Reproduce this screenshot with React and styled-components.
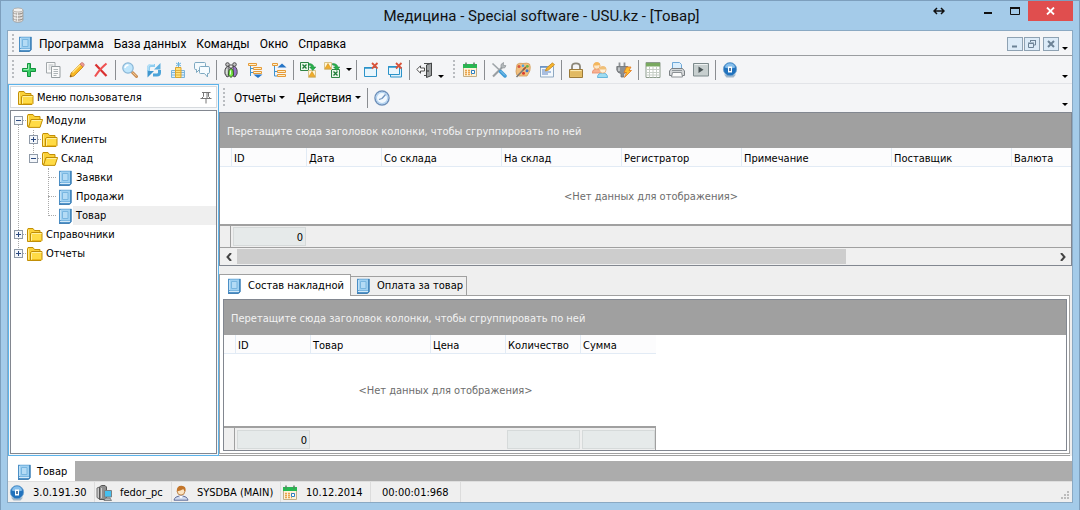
import React from "react";
import styled, { createGlobalStyle, css } from "styled-components";

const gridFont = '"DejaVu Sans Condensed", "Noto Sans", sans-serif';
const menuFont = 'Roboto, "Noto Sans", sans-serif';

const GlobalStyle = createGlobalStyle`
  *, *::before, *::after { box-sizing: border-box; }
  body { margin: 0; background: #a4cbe9; color: #000; font: 11px/14px ${gridFont}; }
  button { margin: 0; padding: 0; border: 0; background: none; color: inherit; font: inherit; }
  ul { list-style: none; margin: 0; padding: 0; }
  svg { display: block; flex: none; }
`;

/* ---------- icons ---------- */

const Svg = ({ w = 16, h = 16, box, children }) => (
  <svg width={w} height={h} viewBox={box || `0 0 ${w} ${h}`} fill="none" aria-hidden="true">
    {children}
  </svg>
);

const DatabaseIcon = () => (
  <Svg>
    <path d="M3 3v10c0 1.300 2.200 2.300 5 2.300s5-1 5-2.300V3" fill="#dedbd8" stroke="#9b958f" strokeWidth=".7" />
    <path d="M3 5.500c1 2 9 2 10 0M3 8.500c1 2 9 2 10 0M3 11.500c1 2 9 2 10 0" stroke="#8d8781" />
    <path d="M5 4v10M7.500 4.500v10" stroke="#fff" strokeOpacity=".7" />
    <ellipse cx="8" cy="3" rx="5" ry="2" fill="#f3f1ef" stroke="#a39d97" strokeWidth=".7" />
  </Svg>
);
const BookIcon = () => (
  <Svg>
    <path d="M2 .8h12.500v13l-1.500 1.700H2z" fill="#5d9fd3" />
    <path d="M2 1h2v14H2z" fill="#4b8fc6" />
    <path d="M3.500 1.500h9.500v11H3.500z" fill="#9fd0f1" />
    <path d="M5.500 3.500h5.500v7H5.500z" fill="#b4dbf5" stroke="#79b6e0" />
    <path d="M3 13.500h10" stroke="#d3e9f8" />
    <path d="M3.500 2v10" stroke="#bfe0f6" />
    <path d="M14 1v12.500L12.500 15.300H2" stroke="#2d70a9" />
  </Svg>
);
const FolderIcon = () => (
  <Svg>
    <path d="M.5 2.500 1 1.500h5l1.500 2h5.500v2.500l-9 8.500H.5z" fill="#fbd137" stroke="#c28f07" />
    <path d="M1.500 3v10.500" stroke="#ffeb8c" />
    <path d="M3.500 6.500 4.500 5.500H15v8l-1 1H3.500z" fill="#ffdb45" stroke="#c08e08" />
    <path d="M4.500 7.500v6M5 6.500h9.500" stroke="#fff0a0" />
    <path d="M5 13.500h9" stroke="#eebb1c" />
  </Svg>
);
const FolderOpenIcon = () => (
  <Svg>
    <path d="M.5 2.500 1 1.500h5l1.500 2h5.500v10H.5z" fill="#fbd137" stroke="#c28f07" />
    <path d="M1.500 3v9" stroke="#ffeb8c" />
    <path d="M4 6.500h11.600L13 14.400H1.500z" fill="#ffdb45" stroke="#c08e08" />
    <path d="M4.800 7.500h9.700" stroke="#fff0a0" />
  </Svg>
);
const PlusIcon = () => (
  <Svg>
    <path d="M6.500 1.500h3v5h5v3h-5v5h-3v-5h-5v-3h5z" fill="#3ccc68" stroke="#12943d" />
    <path d="M7.500 2.500v5h-5" stroke="#97edb0" />
  </Svg>
);
const CopyIcon = () => (
  <Svg>
    <path d="M1.500.500h8.500v10.500H1.500z" fill="#fafafa" stroke="#a2a8ab" />
    <path d="M3.500 3h5M3.500 5h2M3.500 7h2" stroke="#b6bcbf" />
    <path d="M6.500 4.500h8.500v11H6.500z" fill="#fafafa" stroke="#969da0" />
    <path d="M8.500 7.500h4.500M8.500 9.500h4.500M8.500 11.500h4.500M8.500 13.500h3" stroke="#adb4b7" />
  </Svg>
);
const PencilIcon = () => (
  <Svg>
    <path d="m1 15 1.200-4L11 2l3 3-9 9z" fill="#f8b824" stroke="#c47f10" strokeWidth=".8" />
    <path d="m3.500 10.500 8-8" stroke="#ffe58c" strokeWidth="1.500" />
    <path d="m11 2 1.300-1.200q1-.6 2.200.5t.5 2.300L14 5z" fill="#ee9a92" stroke="#bb6961" strokeWidth=".6" />
    <path d="m1 15 .6-2.200L3 14.300z" fill="#6d4a22" />
  </Svg>
);
const CrossIcon = () => (
  <Svg>
    <path d="M2.500 2.500 13.500 14" stroke="#d93030" strokeWidth="2.200" />
    <path d="M13.500 1.500Q7 6.500 2 14.500" stroke="#ef5252" strokeWidth="2" />
  </Svg>
);
const SearchIcon = () => (
  <Svg>
    <path d="m10.500 10.500 4 4" stroke="#c98b50" strokeWidth="3" strokeLinecap="round" />
    <path d="m10.500 10.500 4 3.700" stroke="#f7cf9c" />
    <circle cx="6" cy="6" r="5.200" fill="#bfe6fc" stroke="#8ab6d6" strokeWidth="1.200" />
    <path d="M3 6q.3-2.700 3.500-3" stroke="#fff" strokeWidth="1.500" />
  </Svg>
);
const RefreshIcon = () => (
  <Svg>
    <path d="M2.500 9V6Q2.500 3.500 5 3.500h4" stroke="#8fcdf0" strokeWidth="3" />
    <path d="M8 7.500h6.500V1z" fill="#5fb0e0" />
    <path d="M13.500 8v2.500q0 2.500-2.500 2.500H7" stroke="#4da4d9" strokeWidth="3" />
    <path d="M8 9H1.500v6.500z" fill="#3f97cf" />
    <path d="M2 8V5Q2.500 2.500 5 2.500h3" stroke="#c8e9fa" />
  </Svg>
);
const InsertIcon = () => (
  <Svg>
    <path d="M8.500 0v5M6 1l5 3M11 1 6 4" stroke="#6ab3de" />
    <path d="M1.500 8.500h4v7h-4zM10.500 8.500h4v7h-4z" fill="#dceefa" stroke="#79b4dc" />
    <path d="M1.500 10.500h4M1.500 13h4M10.500 10.500h4M10.500 13h4" stroke="#79b4dc" />
    <path d="M5.500 5.500h5.500v10H5.500z" fill="#ffe27a" stroke="#dba42f" />
    <path d="M5.500 8.500H11M5.500 10.500H11M5.500 13H11" stroke="#e0ad3a" />
  </Svg>
);
const ChatIcon = () => (
  <Svg>
    <path d="M2 .5h8.500q1 0 1 1v5q0 1-1 1H5.500l-3 3V7.500H2q-1.500 0-1.500-1v-5q0-1 1.500-1z" fill="#f4fafd" stroke="#7ea9c1" />
    <path d="M6.500 4.500h7.500q1.500 0 1.500 1v5q0 1-1.500 1h-.5v3.500l-3-3.500H6.500q-1 0-1-1v-5q0-1 1-1z" fill="#f7fcff" stroke="#7ea9c1" />
  </Svg>
);
const PeopleIcon = () => (
  <Svg>
    <path d="M5 4Q1 6 2 12l2 3 2-1V5z" fill="#b4b4b8" stroke="#4c4c4e" />
    <path d="M11 4q4 2 3 8l-2 3-2-1V5z" fill="#9673c6" stroke="#4c4c4e" />
    <path d="M8 6q3 2 2.500 7L8 15.500 5.500 13Q5 8 8 6z" fill="#76e944" stroke="#33502a" />
    <circle cx="4.500" cy="2.500" r="1.800" fill="#c4c4c4" stroke="#4c4c4e" />
    <circle cx="11.500" cy="2.500" r="1.800" fill="#c4c4c4" stroke="#4c4c4e" />
    <circle cx="8" cy="4.500" r="1.700" fill="#eee" stroke="#555" />
    <path d="M3.800 7v5M7.500 8.500v4" stroke="#eaf5e6" />
  </Svg>
);
const TreeIcon = ({ up }) => (
  <Svg>
    {up ? (
      <>
        <path d="M3.500 4v10H6M3.500 9.500H6" stroke="#3f93d0" />
        <path d="M1.500 1.500h5v2h-5z" fill="#fff0c8" stroke="#e59a38" />
        <path d="M6.500 8.500h8v2h-8zM6.500 12.500h8v2h-8z" fill="#fff0c8" stroke="#e59a38" />
        <path d="m6.500 5.500 4.500-4 4.500 4z" fill="#2675c7" />
      </>
    ) : (
      <>
        <path d="M3.500 4v10M3.500 10.500H6M3.500 6.500H6" stroke="#3f93d0" />
        <path d="M1.500 1.500h8v2h-8z" fill="#fff0c8" stroke="#e59a38" />
        <path d="M6.500 5.500h8v2h-8zM6.500 9.500h8v2h-8z" fill="#fff0c8" stroke="#e59a38" />
        <path d="M6.500 12.500h9L11 16z" fill="#2675c7" />
      </>
    )}
  </Svg>
);
const ExcelIcon = ({ inbound }) => (
  <Svg>
    <g transform={inbound ? "translate(7 7)" : ""}>
      <path d="M.5.500h8v8h-8z" fill="#eaf7ea" stroke="#2f8445" />
      <path d="m2.500 2.500 4 4M6.500 2.500l-4 4" stroke="#1d7a37" strokeWidth="1.300" />
    </g>
    <g transform={inbound ? "translate(-8 -8)" : ""}>
      <path d="M8.500 8.500h7v7h-7z" fill="#fff6d8" stroke="#d8c48c" />
      <path d="m12 9.500 3 5H9z" fill="#f0ae2a" stroke="#d08a12" strokeWidth=".6" />
    </g>
    <path d="M8.500 1.500q5 0 5.300 3.500h2L12.800 8.500 9.500 5h2q-.2-1.800-3-2z" fill="#27b04b" stroke="#128033" strokeWidth=".5" />
  </Svg>
);
const CloseWindowIcon = ({ stacked }) => (
  <Svg>
    {stacked && <path d="M3.500 5.500h11v9.500h-11z" fill="#dff1fb" stroke="#2b93c9" />}
    <path d={stacked ? "M1.500 4.500h11v8h-11z" : "M1.500 5.500h12v9h-12z"} fill="#e9f6fd" stroke="#2b93c9" />
    <path d={stacked ? "M1 5h8" : "M1 6h8"} stroke="#2b93c9" strokeWidth="1.500" />
    <path d="m9 1 5.500 5.500M14.500 1 9 6.500" stroke="#d9533a" strokeWidth="1.800" />
  </Svg>
);
const DoorIcon = () => (
  <Svg>
    <path d="M8 1.500h7.500v12H8" fill="#f0f1f1" stroke="#4d4f50" />
    <path d="m10.500 3 5-2v12.500l-5 2z" fill="#9da0a1" stroke="#434546" />
    <path d="M12 8v2" stroke="#333" />
    <path d="M.8 7.500 4.500 3.800v2.200h4v3h-4v2.200z" fill="#fff" stroke="#3b3b3b" strokeWidth=".9" />
  </Svg>
);
const CalendarIcon = () => (
  <Svg>
    <path d="M1.500 2.500h13V14.500h-13z" fill="#fdf3da" stroke="#c2ae86" />
    <path d="M1 2h14v4H1z" fill="#27b850" />
    <path d="M4 .5v3M12 .5v3" stroke="#5d7f64" strokeWidth="1.500" />
    <path d="M3 8.500h7M3 10.500h5M3 12.500h7" stroke="#eaa34c" strokeDasharray="2 1" strokeWidth="1.500" />
    <path d="M9.500 8.500h3v3h-3z" fill="#fff" stroke="#2d7fc1" />
  </Svg>
);
const ToolsIcon = () => (
  <Svg>
    <path d="m2 14.500 9-9" stroke="#9a9fa3" strokeWidth="2.200" />
    <path d="M10 5.500V2.500L12.500.500 12.300 3.300l2.700.4L13.500 6z" fill="#b5babd" stroke="#8b9093" strokeWidth=".7" />
    <path d="m1.500 1.500 7.500 7" stroke="#9fa5a9" strokeWidth="1.700" />
    <path d="m9.500 9.500 4.500 4.500" stroke="#3f9bd6" strokeWidth="3.500" strokeLinecap="round" />
    <path d="m9.500 9 4.500 4.500" stroke="#8ecbf0" />
  </Svg>
);
const PaletteIcon = () => (
  <Svg>
    <path d="M2 2.500Q4.500.5 8 1.500q4-1 6.500.5 1.500 3 .3 7L12 14H4Q.8 13.500 1 9.500z" fill="#f1bf7e" stroke="#d39a55" strokeWidth=".8" />
    <circle cx="4" cy="4.500" r="1.500" fill="#d8563f" />
    <circle cx="8" cy="3.800" r="1.300" fill="#4aa3dd" />
    <circle cx="12.300" cy="4.300" r="1.400" fill="#6ab34b" />
    <circle cx="12" cy="8.800" r="1.500" fill="#3d77c9" />
    <circle cx="8.500" cy="11.300" r="1.500" fill="#da3d2f" />
    <path d="m1.500 15 8.500-9" stroke="#7f7a74" strokeWidth="1.600" />
    <path d="m8 8 3-3" stroke="#a2562e" strokeWidth="1.600" />
  </Svg>
);
const EditIcon = () => (
  <Svg>
    <path d="M1.500 4.500h13v10.500h-13z" fill="#f4f9fd" stroke="#8fa9c2" />
    <path d="M1 5h7" stroke="#5f8cc4" strokeWidth="1.500" />
    <path d="M3 8h4M3 10h9M3 12h6" stroke="#5c84c4" />
    <path d="m6.500 9 1-3L13.500.800l2 2L9.500 8z" fill="#f6b42d" stroke="#b87b14" strokeWidth=".7" />
  </Svg>
);
const LockIcon = () => (
  <Svg>
    <path d="M4 8V4.500Q4 1.300 8 1.300T12 4.500V8" stroke="#8b8678" strokeWidth="1.800" />
    <path d="M1.500 7.500h13v8h-13z" fill="#e6c06a" stroke="#9c7a38" />
    <path d="M2.500 8.500h11" stroke="#faeab6" />
    <path d="M2.500 11h11M2.500 13h11" stroke="#dcb35a" />
  </Svg>
);
const UsersIcon = () => (
  <Svg>
    <path d="M0 11Q.5 7 4.500 7T9 11z" fill="#f7b294" stroke="#ea8c67" strokeWidth=".8" />
    <circle cx="4.800" cy="3.900" r="3.300" fill="#fde7c8" stroke="#eeb06c" />
    <path d="M1.500 3.500Q2 0 5 .2T8 3q-3 .5-6.500.5z" fill="#f4b75c" />
    <path d="M5.500 15.500Q5.500 11 10.500 11t5 4.500z" fill="#9fdcf2" stroke="#4ba8d6" strokeWidth=".8" />
    <circle cx="10.800" cy="7.800" r="3.300" fill="#fff1d9" stroke="#eab07c" strokeWidth=".8" />
    <path d="M7.500 7.500Q8 4 11 4.200t3.400 3q-3 .5-6.900.3z" fill="#f0c078" />
  </Svg>
);
const PlugIcon = () => (
  <Svg>
    <path d="M3.500.5v4M8.500.5v4" stroke="#8d9296" strokeWidth="1.800" />
    <path d="M.8 4.500h11V8q-.5 3-4 3.500v3.500H5v-3.500Q1.500 11 .8 8z" fill="#8c9094" stroke="#6b6f72" strokeWidth=".8" />
    <path d="M3 5.500v3.500" stroke="#d1d4d6" strokeWidth="1.500" />
    <path d="M10.500 5H15l-2 3.500h2.500L8.500 15.500l2-5H8z" fill="#ffbf2e" stroke="#e2771c" strokeWidth=".8" />
  </Svg>
);
const TableIcon = () => (
  <Svg>
    <path d="M1 .5h14v15H1z" fill="#fff" stroke="#8c9b8c" />
    <path d="M1 1h14v3.500H1z" fill="#79a960" />
    <path d="M1.500 7.500h13M1.500 10.500h13M1.500 13h13M4.500 4.500v11M8 4.500v11M11.500 4.500v11" stroke="#c6cec6" />
  </Svg>
);
const PrinterIcon = () => (
  <Svg>
    <path d="M3.500 7V.5h7l2 2V7" fill="#dceffd" stroke="#6ea8d8" />
    <path d="M2.500 6.500h11l2 2.500v4.500H.5V9z" fill="#d4d7d9" stroke="#7b8084" />
    <path d="M3.500 10.500h9l1 4.500h-11z" fill="#fbfbfb" stroke="#8b9094" />
    <path d="M3 8.500h10" stroke="#8f9599" />
  </Svg>
);
const PlayIcon = () => (
  <Svg>
    <path d="M.5 1.500h15v12.500H.5z" fill="#c7cfcf" stroke="#7d8a8c" />
    <path d="M1.500 2.500h13" stroke="#eef2f2" />
    <path d="m5.500 4.500 5 3.200-5 3.300z" fill="#4a5557" />
  </Svg>
);
const InfoIcon = () => (
  <Svg>
    <path d="M2 12.500h12L11.500 15.500h-7z" fill="#9fb6ca" />
    <circle cx="8" cy="7.200" r="6.600" fill="#2172bd" stroke="#6da1cd" strokeWidth=".8" />
    <path d="M2.800 5.500Q4 1.300 8 1.300t5.200 4.200Q8 7.500 2.800 5.500z" fill="#86bfec" />
    <path d="M6 4.500h4v6H6z" fill="#fff" />
    <path d="M8 6v3" stroke="#1c4f86" strokeWidth="1.500" />
  </Svg>
);
const PinIcon = () => (
  <Svg w={12} h={13}>
    <path d="M2 1.500h8.500M3.500 2v3.500L1.500 7.500h9L8.500 5.500V2M7 2v5M.5 7.500h11M6 8v4.500" stroke="#777" />
  </Svg>
);
const ClockIcon = () => (
  <Svg>
    <circle cx="8" cy="8" r="7" fill="#f1f8fe" stroke="#6d8fb9" strokeWidth="1.500" />
    <circle cx="8" cy="8" r="5.700" stroke="#b4d3f0" strokeWidth="1.300" />
    <path d="M8 8.500 11.500 4.500M5 9.500l3-1" stroke="#6f93be" strokeWidth="1.300" />
  </Svg>
);
const ServerIcon = () => (
  <Svg>
    <path d="M1 3v9.500L3.500 14V2z" fill="#c9c9c9" stroke="#6c6c6c" />
    <path d="m3.500 2 2-1.500H9L10.500 2v12.500h-7z" fill="#909090" stroke="#555" />
    <path d="M5.500 3v10" stroke="#cfcfcf" />
    <path d="M8.500 5.500h7v6.500h-7z" fill="#45c0f0" stroke="#7c8082" />
    <path d="M9.500 13h4.500l1.500 2.500H8z" fill="#b5babd" stroke="#666" strokeWidth=".7" />
  </Svg>
);
const UserIcon = () => (
  <Svg>
    <path d="M1 15.200q.5-4 7-4.200 6.500.2 7 4.200z" fill="#cfdaf0" stroke="#5f6c98" />
    <path d="m6 11 2 2.500 2-2.500z" fill="#fff" />
    <circle cx="8" cy="6.300" r="3.800" fill="#fbe4c3" stroke="#b06d2c" strokeWidth=".8" />
    <path d="M3.800 6.500Q3.500.7 8.500.8t4 5.700Q11 6 10.500 4 7.500 5.500 3.800 6.500z" fill="#c3752a" />
  </Svg>
);

/* ---------- window frame ---------- */

const Window = styled.div`
  display: flex;
  flex-direction: column;
  min-height: 100vh;
  padding: 0 6px 7px;
  border: 1px solid #7d9fbd;
  background: #a4cbe9;
`;
const TitleBar = styled.header`
  display: grid;
  grid-template-columns: 1fr auto 1fr;
  height: 29px;
  padding-left: 3px;
`;
const AppBadge = styled.span`
  padding-top: 6px;
`;
const Title = styled.h1`
  margin: 0;
  color: #111;
  font: 400 15px/30px Roboto, "Noto Sans", sans-serif;
`;
const FrameControls = styled.div`
  display: flex;
  justify-content: flex-end;
`;
const FrameButton = styled.button`
  display: flex;
  align-items: center;
  justify-content: center;
  width: ${(p) => (p.$close ? 45 : 27)}px;
  height: 20px;
  margin-right: ${(p) => (p.$apart ? 22 : 0)}px;
  background: ${(p) => (p.$close ? "#e04e4e" : "none")};
`;
const Client = styled.div`
  display: flex;
  flex: 1;
  flex-direction: column;
  border: 1px solid #8aa9c3;
  background: #f4f5f7;
`;

/* ---------- menu and tool bars ---------- */

const Bar = styled.div`
  display: flex;
  align-items: center;
  height: ${(p) => p.$h}px;
  padding-top: ${(p) => p.$top || 0}px;
  padding-left: 4px;
  border-bottom: 1px solid ${(p) => p.$line};
  background: #f4f5f7;
`;
const Grip = styled.span`
  width: 3px;
  height: 20px;
  margin-right: ${(p) => p.$gap || 2}px;
  margin-left: ${(p) => p.$before || 0}px;
  background: repeating-linear-gradient(#b9bcc0 0 2px, transparent 2px 4px) 0 0 / 2px 100% no-repeat;
`;
const MenuItem = styled.button`
  margin-left: ${(p) => (p.$first ? 6 : 10)}px;
  font: 12px/20px ${menuFont};
`;
const Spacer = styled.span`
  flex: 1;
`;
const MdiButton = styled.button`
  display: flex;
  align-items: center;
  justify-content: center;
  width: 16px;
  height: 14px;
  margin-left: ${(p) => (p.$apart ? 3 : 1)}px;
  border: 1px solid #8ea2b3;
  background: #dcebf8;
`;
const Caret = styled.span`
  border: 3px solid transparent;
  border-top-color: #000;
  border-bottom-width: 0;
`;
const Overflow = styled.button`
  display: flex;
  align-items: flex-end;
  justify-content: center;
  align-self: stretch;
  width: ${(p) => (p.$edge ? 12 : 10)}px;
  padding-bottom: 5px;
  margin-right: ${(p) => (p.$edge ? 1 : 0)}px;
`;
const ToolButton = styled.button`
  display: flex;
  align-items: center;
  justify-content: center;
  width: ${(p) => p.$w || 24}px;
  height: 24px;
`;
const Divider = styled.span`
  width: 1px;
  height: 20px;
  margin: 0 2px;
  background: #8a8d91;
`;
const DropButton = styled.button`
  display: flex;
  align-items: center;
  gap: 3px;
  margin-right: ${(p) => (p.$last ? 4 : 12)}px;
  font: 12px/20px ${menuFont};
`;

/* ---------- side panel ---------- */

const Workspace = styled.div`
  display: flex;
  flex: 1;
`;
const Side = styled.aside`
  display: flex;
  flex: 0 0 211px;
  flex-direction: column;
  gap: 2px;
  padding: 1px;
  border: 1px solid #5cb3ea;
  background: #f6f8fa;
`;
const SideTitle = styled.h2`
  display: flex;
  align-items: center;
  gap: 3px;
  height: 22px;
  margin: 0;
  padding: 1px 4px 0 7px;
  border: 1px solid #d6dade;
  background: #fff;
  font: 400 11px/14px ${gridFont};
`;
const Tree = styled.ul`
  flex: 1;
  border: 1px solid #828790;
  background: #fff;
`;
const Branch = styled.ul`
  position: relative;
`;
const TreeRow = styled.div`
  display: flex;
  align-items: center;
  height: 19px;
  padding-left: ${(p) => 3 + p.$level * 15}px;
`;
const Toggle = styled.button`
  position: relative;
  z-index: 1;
  display: flex;
  align-items: center;
  justify-content: center;
  width: 9px;
  height: 9px;
  border: 1px solid #8f9aa8;
  background: #f4f7fb;
`;
const Guide = styled.span`
  position: absolute;
  z-index: 0;
  left: ${(p) => p.$x}px;
  top: ${(p) => p.$top}px;
  bottom: ${(p) => p.$bottom}px;
  border-left: 1px dotted #a9a9a9;
`;
const Twig = styled.span`
  width: ${(p) => (p.$short ? 3 : 8)}px;
  margin-right: 1px;
  margin-left: ${(p) => (p.$short ? 0 : 4)}px;
  border-top: 1px dotted #a9a9a9;
`;
const NodeLabel = styled.button`
  flex: 1;
  height: 19px;
  padding-left: 3px;
  background: ${(p) => (p.$selected ? "#efefef" : "none")};
  text-align: left;
`;
const TreeRoot = styled.li`
  position: relative;
`;

/* ---------- data area ---------- */

const Content = styled.main`
  display: flex;
  flex: 1;
  flex-direction: column;
  min-width: 0;
  background: #efefef;
`;
const GridFrame = styled.section`
  overflow: hidden;
  border: 1px solid #828790;
  background: #fff;
  ${(p) => p.$grow && css`flex: 1;`}
`;
const GroupBox = styled.div`
  height: 35px;
  padding-left: 7px;
  background: #a0a0a0;
  color: #f2f2f2;
  line-height: 37px;
  white-space: nowrap;
`;
const Table = styled.table`
  width: ${(p) => p.$width || "100%"};
  border-collapse: separate;
  border-spacing: 0;
  table-layout: fixed;
`;
const Th = styled.th`
  height: 19px;
  padding: 3px 0 0 2px;
  border-bottom: 1px solid #e2ebf5;
  border-left: ${(p) => (p.$lead ? "0" : "1px solid #e2ebf5")};
  background: #fcfcfd;
  font-weight: 400;
  text-align: left;
  white-space: nowrap;
`;
const EmptyCell = styled.td`
  height: ${(p) => p.$h}px;
  padding: 2px 0 0;
  color: #6d6d6d;
  text-align: center;
`;
const FootCell = styled.td`
  height: 24px;
  padding: 1px 0 1px 2px;
  border-top: 2px solid #a0a0a0;
  border-right: ${(p) => (p.$lead || p.$last ? "1px solid #a0a0a0" : "0")};
  border-bottom: ${(p) => (p.$ruled ? "1px solid #a0a0a0" : "0")};
  background: #efefef;
`;
const Sum = styled.output`
  display: block;
  height: 19px;
  padding-right: 2px;
  border: 1px solid #d6dada;
  background: #e6eaea;
  line-height: 19px;
  text-align: right;
`;
const ScrollBar = styled.div`
  display: flex;
  height: 17px;
  padding-top: 1px;
  background: #f0f0f0;
`;
const ScrollButton = styled.button`
  display: flex;
  align-items: center;
  justify-content: center;
  width: 17px;
  height: 15px;
`;
const ScrollTrack = styled.div`
  flex: 1;
  height: 15px;
`;
const Thumb = styled.div`
  width: 74.5%;
  height: 15px;
  background: #cdcdcd;
`;
const Tabs = styled.div`
  display: flex;
  align-items: flex-end;
  margin-top: 8px;
`;
const Tab = styled.button`
  display: flex;
  align-items: center;
  gap: 6px;
  height: ${(p) => (p.$active ? 22 : 19)}px;
  padding: 0 ${(p) => (p.$active ? 6 : 3)}px 0 ${(p) => (p.$active ? 6 : 4)}px;
  margin-bottom: ${(p) => (p.$active ? -1 : 0)}px;
  z-index: 1;
  border: 1px solid #a0a0a0;
  border-bottom: 0;
  border-left: ${(p) => (p.$active ? "1px solid #a0a0a0" : "0")};
  background: ${(p) => (p.$active ? "#fff" : "#efefef")};
`;
const TabPage = styled.div`
  display: flex;
  flex: 1;
  flex-direction: column;
  margin-right: 2px;
  padding: 3px 2px 2px 3px;
  border: 1px solid #a0a0a0;
  background: #fff;
`;
const PageEdge = styled.div`
  height: 2px;
  margin-right: 2px;
  border-bottom: 1px solid #a0a0a0;
  background: #fff;
`;

/* ---------- bottom bars ---------- */

const DocumentTabs = styled.nav`
  display: flex;
  height: 26px;
  border-top: 5px solid #fff;
  border-bottom: 1px solid #dedede;
  background: #acacac;
`;
const DocumentTab = styled.button`
  display: flex;
  align-items: center;
  gap: 5px;
  height: 20px;
  padding: 2px 8px 0;
  background: #fff;
`;
const StatusBar = styled.footer`
  display: flex;
  height: 20px;
  background: #efefef;
`;
const StatusItem = styled.span`
  display: flex;
  align-items: center;
  gap: 8px;
  width: ${(p) => p.$w}px;
  padding-top: 2px;
  padding-left: ${(p) => (p.$plain ? 11 : 1)}px;
  border-right: 1px solid #dcdcdc;
  white-space: nowrap;
`;
const SizeGrip = styled.span`
  align-self: flex-end;
  margin-left: auto;
  padding: 2px;
`;

/* ---------- composition ---------- */

const tools = [
  ["Добавить", PlusIcon], ["Копировать", CopyIcon], ["Изменить", PencilIcon], ["Удалить", CrossIcon], null,
  ["Поиск", SearchIcon], ["Обновить", RefreshIcon], ["Вставить", InsertIcon], ["Сообщения", ChatIcon], null,
  ["Группы", PeopleIcon], ["Развернуть", TreeIcon], ["Свернуть", TreeIcon, { up: true }], null,
  ["Экспорт", ExcelIcon], ["Импорт", ExcelIcon, { inbound: true }], "caret", null,
  ["Закрыть окно", CloseWindowIcon], ["Закрыть все", CloseWindowIcon, { stacked: true }], null,
  ["Выход", DoorIcon], "more",
  ["Календарь", CalendarIcon], null,
  ["Настройки", ToolsIcon], ["Оформление", PaletteIcon], ["Правка", EditIcon], null,
  ["Блокировка", LockIcon], ["Пользователи", UsersIcon], ["Подключение", PlugIcon], null,
  ["Таблица", TableIcon], ["Печать", PrinterIcon], ["Запуск", PlayIcon], null,
  ["О программе", InfoIcon],
];

const ToolStrip = () =>
  tools.map((tool, i) => {
    if (tool === null) return <Divider key={i} />;
    if (tool === "caret") return <ToolButton key={i} $w={10} aria-label="Ещё"><Caret /></ToolButton>;
    if (tool === "more")
      return (
        <React.Fragment key={i}>
          <Overflow aria-label="Кнопки панели"><Caret /></Overflow>
          <Grip $before={7} />
        </React.Fragment>
      );
    const [name, Icon, props] = tool;
    return <ToolButton key={i} aria-label={name}><Icon {...props} /></ToolButton>;
  });

const Expander = ({ open }) => (
  <>
    <Toggle aria-label={open ? "Свернуть ветвь" : "Развернуть ветвь"}>
      <Svg w={7} h={7}><path d={open ? "M1 3.500h5" : "M1 3.500h5M3.500 1v5"} stroke="#2c4a80" /></Svg>
    </Toggle>
    <Twig $short />
  </>
);

const TreeNode = ({ level, open, leaf, selected, children }) => (
  <TreeRow $level={level}>
    {leaf ? <Twig /> : <Expander open={open} />}
    {leaf ? <BookIcon /> : open ? <FolderOpenIcon /> : <FolderIcon />}
    <NodeLabel $selected={selected}>{children}</NodeLabel>
  </TreeRow>
);

const groupHint = "Перетащите сюда заголовок колонки, чтобы сгруппировать по ней";
const emptyHint = "<Нет данных для отображения>";

const DataTable = ({ columns, width, bodyHeight, ruled, closed }) => (
  <Table $width={width}>
    <colgroup>
      <col width="11" />
      {columns.map((c) => <col key={c.title} width={c.width} />)}
    </colgroup>
    <thead>
      <tr>
        <Th $lead />
        {columns.map((c) => <Th key={c.title} scope="col">{c.title}</Th>)}
      </tr>
    </thead>
    <tbody>
      <tr>
        <td />
        <EmptyCell colSpan={columns.length} $h={bodyHeight}>{emptyHint}</EmptyCell>
      </tr>
    </tbody>
    <tfoot>
      <tr>
        <FootCell $lead $ruled={ruled} />
        {columns.map((c, i) => (
          <FootCell key={c.title} $ruled={ruled} $last={closed && i === columns.length - 1}>
            {c.sum !== undefined && <Sum>{c.sum}</Sum>}
          </FootCell>
        ))}
      </tr>
    </tfoot>
  </Table>
);

const invoiceColumns = [
  { title: "ID", width: 75, sum: "0" },
  { title: "Дата", width: 75 },
  { title: "Со склада", width: 120 },
  { title: "На склад", width: 120 },
  { title: "Регистратор", width: 120 },
  { title: "Примечание", width: 150 },
  { title: "Поставщик", width: 120 },
  { title: "Валюта" },
];
const itemColumns = [
  { title: "ID", width: 75, sum: "0" },
  { title: "Товар", width: 120 },
  { title: "Цена", width: 75 },
  { title: "Количество", width: 75, sum: "" },
  { title: "Сумма", width: 76, sum: "" },
];

export default function App() {
  return (
    <>
      <GlobalStyle />
      <Window>
        <TitleBar>
          <AppBadge><DatabaseIcon /></AppBadge>
          <Title>Медицина - Special software - USU.kz - [Товар]</Title>
          <FrameControls>
            <FrameButton $apart aria-label="Переместить">
              <Svg w={12} h={8}><path d="M1 4h10M4 1 1 4l3 3M8 1l3 3-3 3" stroke="#111" strokeWidth="1.500" /></Svg>
            </FrameButton>
            <FrameButton aria-label="Свернуть">
              <Svg w={10} h={8}><path d="M1 6h8" stroke="#111" strokeWidth="2" /></Svg>
            </FrameButton>
            <FrameButton aria-label="Развернуть">
              <Svg w={10} h={8}><path d="M0 1h10" stroke="#111" strokeWidth="2" /><path d="M.5 1v6.500h9V1" stroke="#111" /></Svg>
            </FrameButton>
            <FrameButton $close aria-label="Закрыть">
              <Svg w={9} h={8}><path d="m1 .5 7 7M8 .5l-7 7" stroke="#fff" strokeWidth="1.800" /></Svg>
            </FrameButton>
          </FrameControls>
        </TitleBar>
        <Client>
          <Bar as="nav" $h={25} $top={2} $line="#9a9da1">
            <Grip />
            <BookIcon />
            {["Программа", "База данных", "Команды", "Окно", "Справка"].map((m, i) => (
              <MenuItem key={m} $first={i === 0}>{m}</MenuItem>
            ))}
            <Spacer />
            <MdiButton aria-label="Свернуть документ">
              <Svg w={8} h={8}><path d="M1 6.500h5" stroke="#6c8296" strokeWidth="2" /></Svg>
            </MdiButton>
            <MdiButton aria-label="Восстановить документ">
              <Svg w={8} h={8}><path d="M2.500 2V.5h5V5H6M.5 3.500h5v4h-5zM0 3h6M2 .5h6" stroke="#6c8296" /></Svg>
            </MdiButton>
            <MdiButton $apart aria-label="Закрыть документ">
              <Svg w={8} h={8}><path d="m1 1 6 6M7 1 1 7" stroke="#6c8296" strokeWidth="2" /></Svg>
            </MdiButton>
            <Overflow $edge aria-label="Кнопки меню"><Caret /></Overflow>
          </Bar>
          <Bar $h={28} $line="#e2e4e8">
            <Grip />
            <ToolStrip />
            <Spacer />
            <Overflow $edge aria-label="Кнопки инструментов"><Caret /></Overflow>
          </Bar>
          <Workspace>
            <Side>
              <SideTitle>
                <FolderIcon />
                Меню пользователя
                <Spacer />
                <PinIcon />
              </SideTitle>
              <Tree>
                <TreeRoot>
                  <Guide $x={7} $top={14} $bottom={-25} />
                  <TreeNode level={0} open>Модули</TreeNode>
                  <Branch>
                    <Guide $x={22} $top={0} $bottom={66} />
                    <li><TreeNode level={1}>Клиенты</TreeNode></li>
                    <li>
                      <TreeNode level={1} open>Склад</TreeNode>
                      <Branch>
                        <Guide $x={37} $top={0} $bottom={9} />
                        <li><TreeNode level={2} leaf>Заявки</TreeNode></li>
                        <li><TreeNode level={2} leaf>Продажи</TreeNode></li>
                        <li><TreeNode level={2} leaf selected>Товар</TreeNode></li>
                      </Branch>
                    </li>
                  </Branch>
                </TreeRoot>
                <li><TreeNode level={0}>Справочники</TreeNode></li>
                <li><TreeNode level={0}>Отчеты</TreeNode></li>
              </Tree>
            </Side>
            <Content>
              <Bar $h={28} $line="#f4f5f7">
                <Grip $gap={8} />
                <DropButton>Отчеты <Caret /></DropButton>
                <DropButton $last>Действия <Caret /></DropButton>
                <Divider />
                <ToolButton aria-label="Время"><ClockIcon /></ToolButton>
                <Spacer />
                <Overflow $edge aria-label="Кнопки отчетов"><Caret /></Overflow>
              </Bar>
              <GridFrame>
                <GroupBox>{groupHint}</GroupBox>
                <DataTable columns={invoiceColumns} bodyHeight={57} ruled />
                <ScrollBar>
                  <ScrollButton aria-label="Влево">
                    <Svg w={6} h={8}><path d="M5 0 1.500 4 5 8" stroke="#444" strokeWidth="2" /></Svg>
                  </ScrollButton>
                  <ScrollTrack><Thumb /></ScrollTrack>
                  <ScrollButton aria-label="Вправо">
                    <Svg w={6} h={8}><path d="M1 0l3.500 4L1 8" stroke="#444" strokeWidth="2" /></Svg>
                  </ScrollButton>
                </ScrollBar>
              </GridFrame>
              <Tabs>
                <Tab $active><BookIcon />Состав накладной</Tab>
                <Tab><BookIcon />Оплата за товар</Tab>
              </Tabs>
              <TabPage>
                <GridFrame $grow>
                  <GroupBox>{groupHint}</GroupBox>
                  <DataTable columns={itemColumns} width="432px" bodyHeight={72} closed />
                </GridFrame>
              </TabPage>
              <PageEdge />
            </Content>
          </Workspace>
          <DocumentTabs>
            <DocumentTab><BookIcon />Товар</DocumentTab>
          </DocumentTabs>
          <StatusBar>
            <StatusItem $w={87}><InfoIcon />3.0.191.30</StatusItem>
            <StatusItem $w={77}><ServerIcon />fedor_pc</StatusItem>
            <StatusItem $w={109}><UserIcon />SYSDBA (MAIN)</StatusItem>
            <StatusItem $w={90}><CalendarIcon />10.12.2014</StatusItem>
            <StatusItem $w={90} $plain>00:00:01:968</StatusItem>
            <SizeGrip>
              <Svg w={9} h={9}><path d="M6 1h2M3 4h2M6 4h2M0 7h2M3 7h2M6 7h2" stroke="#bcbcbc" strokeWidth="2" /></Svg>
            </SizeGrip>
          </StatusBar>
        </Client>
      </Window>
    </>
  );
}
